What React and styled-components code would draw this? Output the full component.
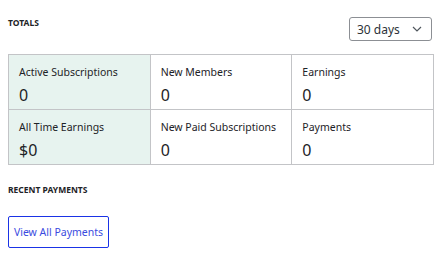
import React from "react";
import styled, { createGlobalStyle } from "styled-components";

const GlobalStyle = createGlobalStyle`
  body {
    margin: 0;
    background: #ffffff;
    font-family: "Noto Sans", "Open Sans", Arial, sans-serif;
    color: #1d2327;
  }
`;

const stats = [
  { label: "Active Subscriptions", value: "0", highlight: true },
  { label: "New Members", value: "0" },
  { label: "Earnings", value: "0" },
  { label: "All Time Earnings", value: "$0", highlight: true },
  { label: "New Paid Subscriptions", value: "0" },
  { label: "Payments", value: "0" },
];

export default function App() {
  return (
    <>
      <GlobalStyle />
      <Page>
        <TopBar>
          <SectionTitle>Totals</SectionTitle>
          <Select>
            <span>30 days</span>
            <svg width="10" height="6" viewBox="0 0 10 6">
              <path d="M1 1l4 4 4-4" fill="none" stroke="#50575e" strokeWidth="1.2" />
            </svg>
          </Select>
        </TopBar>
        <StatsGrid>
          {stats.map((s) => (
            <Cell key={s.label} $highlight={s.highlight}>
              <Label>{s.label}</Label>
              <Value>{s.value}</Value>
            </Cell>
          ))}
        </StatsGrid>
        <RecentTitle>Recent Payments</RecentTitle>
        <OutlineButton>View All Payments</OutlineButton>
      </Page>
    </>
  );
}

const Page = styled.div`
  padding: 17px 10px 0 8px;
  width: 444px;
  box-sizing: border-box;
`;

const TopBar = styled.div`
  display: flex;
  justify-content: space-between;
  align-items: flex-start;
  padding-right: 2px;
`;

const SectionTitle = styled.h3`
  margin: 0;
  font-size: 8.5px;
  font-weight: 700;
  text-transform: uppercase;
  color: #1d2327;
  line-height: 12px;
`;

const Select = styled.div`
  width: 83px;
  height: 24px;
  box-sizing: border-box;
  border: 1px solid #8c8f94;
  border-radius: 3px;
  display: flex;
  align-items: center;
  justify-content: space-between;
  padding: 0 9px 0 7px;
  font-size: 12px;
  color: #2c3338;
`;

const StatsGrid = styled.div`
  margin-top: 13px;
  display: grid;
  grid-template-columns: repeat(3, 1fr);
  border-top: 1px solid #c3c4c7;
  border-left: 1px solid #c3c4c7;
  width: 426px;
  box-sizing: border-box;
`;

const Cell = styled.div`
  height: 55px;
  box-sizing: border-box;
  border-right: 1px solid #c3c4c7;
  border-bottom: 1px solid #c3c4c7;
  background: ${(p) => (p.$highlight ? "#e7f3ef" : "#ffffff")};
  padding: 10px 0 0 10px;
`;

const Label = styled.div`
  font-size: 10.5px;
  line-height: 14px;
  color: #1d2327;
`;

const Value = styled.div`
  margin-top: 6px;
  font-size: 16px;
  line-height: 20px;
  color: #1d2327;
`;

const RecentTitle = styled.h3`
  margin: 19px 0 0;
  font-size: 8.5px;
  font-weight: 700;
  text-transform: uppercase;
  line-height: 12px;
  color: #1d2327;
`;

const OutlineButton = styled.button`
  margin-top: 20px;
  width: 101px;
  height: 32px;
  box-sizing: border-box;
  background: #ffffff;
  border: 1px solid #1a33e6;
  border-radius: 2px;
  color: #3a4be0;
  font-family: inherit;
  font-size: 10.5px;
  padding: 0;
  cursor: pointer;
`;
